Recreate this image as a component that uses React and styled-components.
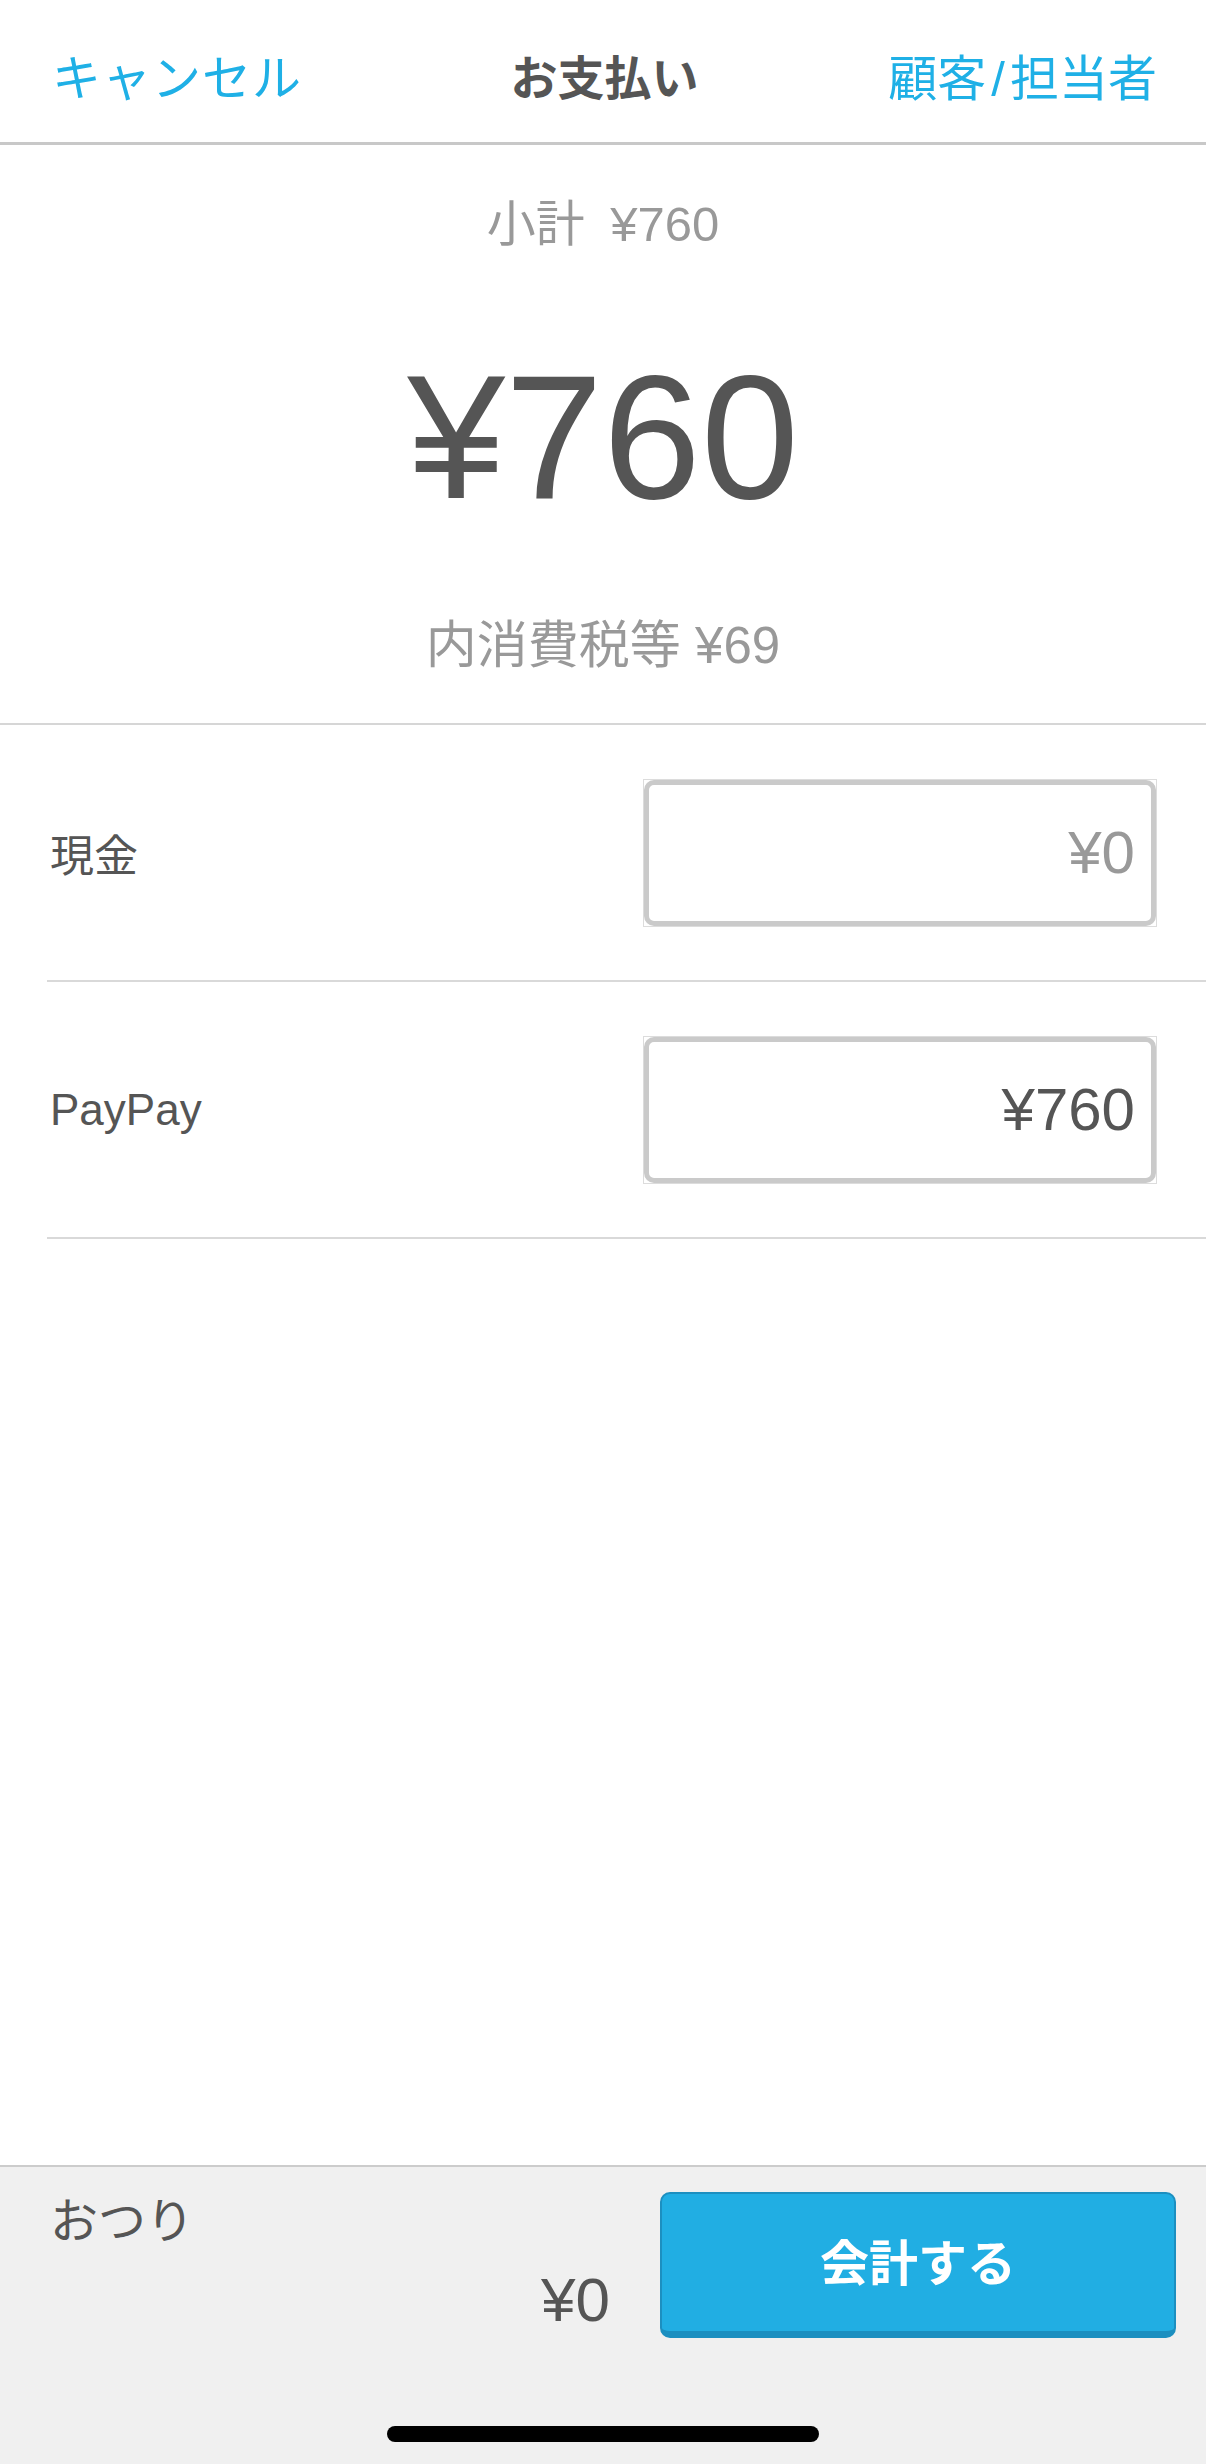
import React from 'react';
import styled, { createGlobalStyle } from 'styled-components';

const GlobalStyle = createGlobalStyle`
  html, body {
    margin: 0;
    padding: 0;
    background: #ffffff;
  }
  body {
    font-family: "Liberation Sans", "Noto Sans CJK JP", sans-serif;
  }
`

const Screen = styled.div`
  width: 1206px;
  height: 2464px;
  display: flex;
  flex-direction: column;
  background: #ffffff;
  overflow: hidden;
`

const Header = styled.div`
  height: 145px;
  box-sizing: border-box;
  border-bottom: 3px solid #c8c8c8;
  display: grid;
  grid-template-columns: 1fr auto 1fr;
  align-items: center;
  padding: 6px 49px 0 52px;
`

const NavLink = styled.span`
  font-size: 49px;
  color: #1fb0e6;
  letter-spacing: ${({ $right }) => ($right ? '0' : '1px')};
  justify-self: ${({ $right }) => ($right ? 'end' : 'start')};
`

const Slash = styled.span`
  margin: 0 5px;
`

const Title = styled.span`
  font-size: 47px;
  font-weight: 700;
  color: #555555;
`

const Summary = styled.div`
  display: flex;
  flex-direction: column;
  align-items: center;
  padding: 49px 0 47px;
  border-bottom: 2px solid #d6d6d6;
`

const SubTotal = styled.div`
  font-size: 49px;
  line-height: 60px;
  color: #999999;
  word-spacing: 12px;
`

const Total = styled.div`
  font-size: 176px;
  line-height: 200px;
  color: #555555;
  margin-top: 83px;
`

const Tax = styled.div`
  font-size: 51px;
  line-height: 60px;
  color: #999999;
  margin-top: 79px;
`

const Row = styled.div`
  height: 257px;
  box-sizing: border-box;
  margin-left: 47px;
  padding: 0 49px 0 3px;
  border-bottom: 2px solid #d9d9d9;
  display: flex;
  align-items: center;
  justify-content: space-between;
`

const Label = styled.span`
  font-size: 44px;
  color: #555555;
`

const InputFrame = styled.div`
  width: 514px;
  height: 148px;
  box-sizing: border-box;
  border: 1px solid #dcdcdc;
  display: flex;
`

const Input = styled.div`
  flex: 1;
  border: 5px solid #cacaca;
  border-radius: 10px;
  display: flex;
  align-items: center;
  justify-content: flex-end;
  padding-right: 16px;
  font-size: 60px;
  color: ${({ $muted }) => ($muted ? '#999999' : '#555555')};
`

const Spacer = styled.div`
  flex: 1;
`

const Footer = styled.div`
  height: 299px;
  box-sizing: border-box;
  border-top: 2px solid #cccccc;
  background: #f0f0f0;
  display: flex;
  flex-direction: column;
  padding: 25px 0 22px;
`

const FooterRow = styled.div`
  display: flex;
  gap: 50px;
  padding: 0 30px 0 50px;
`

const Change = styled.div`
  flex: 1;
  display: flex;
  flex-direction: column;
`

const ChangeLabel = styled.span`
  font-size: 48px;
  line-height: 60px;
  color: #555555;
`

const ChangeAmount = styled.span`
  align-self: flex-end;
  font-size: 62px;
  line-height: 70px;
  color: #555555;
  margin-top: 13px;
`

const CheckoutButton = styled.button`
  width: 516px;
  height: 146px;
  border: 2px solid #1c8fc0;
  border-bottom-width: 7px;
  border-radius: 10px;
  background: #21aee3;
  color: #ffffff;
  font-family: inherit;
  font-size: 49px;
  font-weight: 700;
  display: flex;
  align-items: center;
  justify-content: center;
  padding: 0 0 6px;
`

const HomeIndicator = styled.div`
  margin: auto auto 0;
  width: 432px;
  height: 16px;
  border-radius: 8px;
  background: #000000;
`

const payments = [
  { name: '現金', amount: '¥0', muted: true },
  { name: 'PayPay', amount: '¥760', muted: false },
]

export default function App() {
  return (
    <Screen>
      <GlobalStyle />
      <Header>
        <NavLink>キャンセル</NavLink>
        <Title>お支払い</Title>
        <NavLink $right>顧客<Slash>/</Slash>担当者</NavLink>
      </Header>
      <Summary>
        <SubTotal>小計 ¥760</SubTotal>
        <Total>¥760</Total>
        <Tax>内消費税等 ¥69</Tax>
      </Summary>
      {payments.map((p) => (
        <Row key={p.name}>
          <Label>{p.name}</Label>
          <InputFrame>
            <Input $muted={p.muted}>{p.amount}</Input>
          </InputFrame>
        </Row>
      ))}
      <Spacer />
      <Footer>
        <FooterRow>
          <Change>
            <ChangeLabel>おつり</ChangeLabel>
            <ChangeAmount>¥0</ChangeAmount>
          </Change>
          <CheckoutButton>会計する</CheckoutButton>
        </FooterRow>
        <HomeIndicator />
      </Footer>
    </Screen>
  )
}
